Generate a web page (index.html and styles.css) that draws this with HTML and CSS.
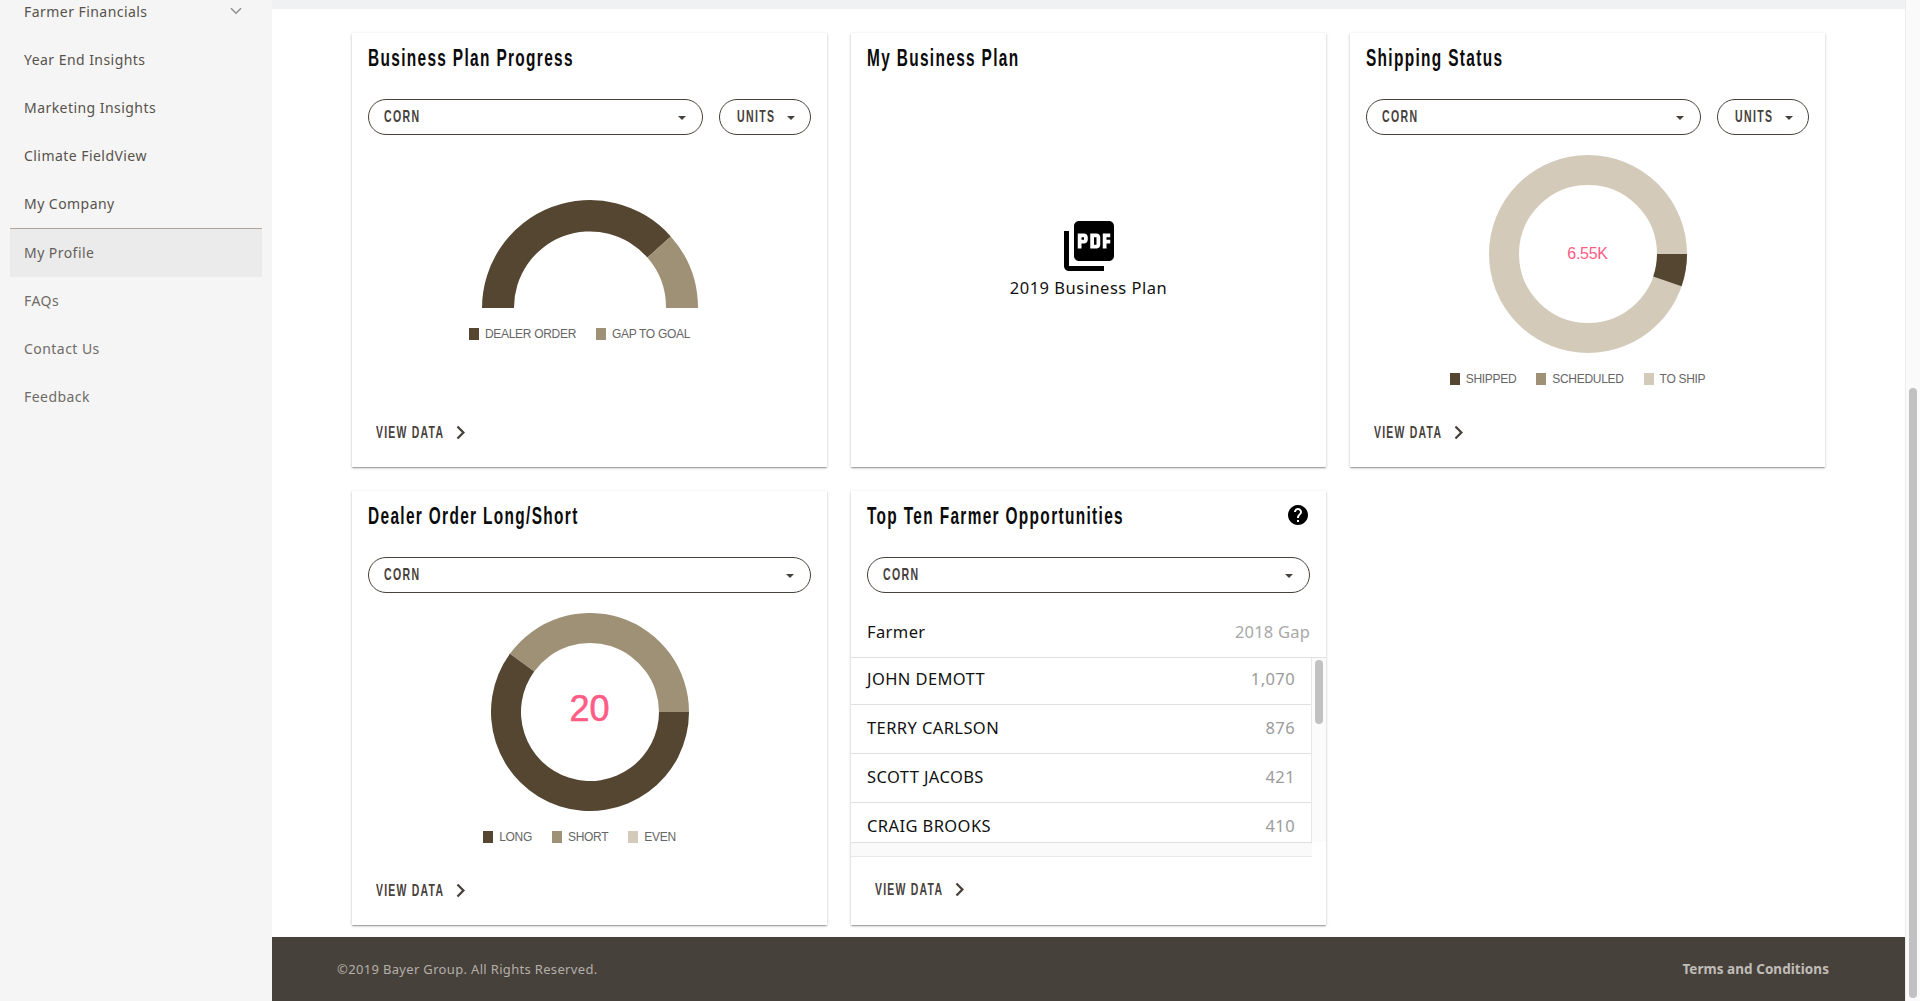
FILE: index.html
```html
<!DOCTYPE html>
<html lang="en">
<head>
<meta charset="utf-8">
<title>Dashboard</title>
<link rel="stylesheet" href="styles.css">
</head>
<body>
<aside class="sidebar">
  <nav class="nav">
    <a class="nav-item nav-item-expand"><span>Farmer Financials</span>
      <svg class="nav-chevron" width="12" height="8" viewBox="0 0 12 8"><path d="M1 1.2l5 5 5-5" fill="none" stroke="#8f8f8f" stroke-width="1.5"/></svg>
    </a>
    <a class="nav-item">Year End Insights</a>
    <a class="nav-item">Marketing Insights</a>
    <a class="nav-item">Climate FieldView</a>
    <a class="nav-item">My Company</a>
    <a class="nav-item nav-item-active">My Profile</a>
    <a class="nav-item nav-item-muted">FAQs</a>
    <a class="nav-item nav-item-muted">Contact Us</a>
    <a class="nav-item nav-item-muted">Feedback</a>
  </nav>
</aside>
<div class="main">
  <div class="top-strip"></div>
  <main class="content">
    <section class="card">
      <header class="card-head"><h2 class="card-title"><span class="squeeze">Business Plan Progress</span></h2></header>
      <div class="filters">
        <div class="pill pill-grow"><span class="pill-label">CORN</span><i class="caret"></i></div>
        <div class="pill pill-unit"><span class="pill-label">UNITS</span><i class="caret"></i></div>
      </div>
      <div class="chart chart-gauge">
        <svg class="gauge" width="216" height="108" viewBox="0 0 216 108">
          <path fill="#544630" d="M0 108A108 108 0 0 1 188.8 36.4L165.4 57.6A76 76 0 0 0 32 108Z"/>
          <path fill="#9f9176" d="M188.8 36.4A108 108 0 0 1 216 108H184A76 76 0 0 0 165.4 57.6Z"/>
        </svg>
        <ul class="legend">
          <li class="legend-item"><i class="swatch swatch-dark"></i>DEALER ORDER</li>
          <li class="legend-item"><i class="swatch swatch-mid"></i>GAP TO GOAL</li>
        </ul>
      </div>
      <a class="view-data"><span class="squeeze-action">VIEW DATA</span><svg class="view-icon" width="27" height="27" viewBox="0 0 24 24"><path fill="#47413b" d="M10 6L8.59 7.41 13.17 12l-4.58 4.59L10 18l6-6z"/></svg></a>
    </section>

    <section class="card">
      <header class="card-head"><h2 class="card-title"><span class="squeeze">My Business Plan</span></h2></header>
      <div class="plan">
        <svg class="plan-icon" width="60" height="60" viewBox="0 0 24 24"><path fill="#000" d="M20 2H8c-1.1 0-2 .9-2 2v12c0 1.1.9 2 2 2h12c1.1 0 2-.9 2-2V4c0-1.1-.9-2-2-2zm-8.5 7.5c0 .83-.67 1.5-1.5 1.5H9v2H7.5V7H10c.83 0 1.5.67 1.5 1.5v1zm5 2c0 .83-.67 1.5-1.5 1.5h-2.5V7H15c.83 0 1.5.67 1.5 1.5v3zm4-3H19v1h1.5V11H19v2h-1.5V7h3v1.5zM9 9.5h1v-1H9v1zM4 6H2v14c0 1.1.9 2 2 2h14v-2H4V6zm10 5.5h1v-3h-1v3z"/></svg>
        <div class="plan-name">2019 Business Plan</div>
      </div>
    </section>

    <section class="card">
      <header class="card-head"><h2 class="card-title"><span class="squeeze">Shipping Status</span></h2></header>
      <div class="filters">
        <div class="pill pill-grow"><span class="pill-label">CORN</span><i class="caret"></i></div>
        <div class="pill pill-unit"><span class="pill-label">UNITS</span><i class="caret"></i></div>
      </div>
      <div class="chart">
        <div class="donut">
          <svg width="198" height="198" viewBox="-99 -99 198 198">
            <circle r="84" fill="none" stroke="#d3cab9" stroke-width="30"/>
            <path fill="#544630" d="M99 0A99 99 0 0 1 93.6 32.2L65.2 22.5A69 69 0 0 0 69 0Z"/>
          </svg>
          <div class="donut-value">6.55K</div>
        </div>
        <ul class="legend">
          <li class="legend-item"><i class="swatch swatch-dark"></i>SHIPPED</li>
          <li class="legend-item"><i class="swatch swatch-mid"></i>SCHEDULED</li>
          <li class="legend-item"><i class="swatch swatch-light"></i>TO SHIP</li>
        </ul>
      </div>
      <a class="view-data"><span class="squeeze-action">VIEW DATA</span><svg class="view-icon" width="27" height="27" viewBox="0 0 24 24"><path fill="#47413b" d="M10 6L8.59 7.41 13.17 12l-4.58 4.59L10 18l6-6z"/></svg></a>
    </section>

    <section class="card">
      <header class="card-head"><h2 class="card-title"><span class="squeeze">Dealer Order Long/Short</span></h2></header>
      <div class="filters">
        <div class="pill pill-grow"><span class="pill-label">CORN</span><i class="caret"></i></div>
      </div>
      <div class="chart">
        <div class="donut">
          <svg width="198" height="198" viewBox="-99 -99 198 198">
            <path fill="#9f9176" d="M-80.1 -58.2A99 99 0 0 1 99 0H69A69 69 0 0 0 -55.8 -40.6Z"/>
            <path fill="#544630" d="M99 0A99 99 0 1 1 -80.1 -58.2L-55.8 -40.6A69 69 0 1 0 69 0Z"/>
          </svg>
          <div class="donut-value donut-value-large">20</div>
        </div>
        <ul class="legend">
          <li class="legend-item"><i class="swatch swatch-dark"></i>LONG</li>
          <li class="legend-item"><i class="swatch swatch-mid"></i>SHORT</li>
          <li class="legend-item"><i class="swatch swatch-light"></i>EVEN</li>
        </ul>
      </div>
      <a class="view-data"><span class="squeeze-action">VIEW DATA</span><svg class="view-icon" width="27" height="27" viewBox="0 0 24 24"><path fill="#47413b" d="M10 6L8.59 7.41 13.17 12l-4.58 4.59L10 18l6-6z"/></svg></a>
    </section>

    <section class="card">
      <header class="card-head card-head-split"><h2 class="card-title"><span class="squeeze">Top Ten Farmer Opportunities</span></h2>
        <svg class="help-icon" width="24" height="24" viewBox="0 0 24 24"><path fill="#000" d="M12 2C6.48 2 2 6.48 2 12s4.48 10 10 10 10-4.48 10-10S17.52 2 12 2zm1 17h-2v-2h2v2zm2.07-7.75l-.9.92C13.45 12.9 13 13.5 13 15h-2v-.5c0-1.1.45-2.1 1.17-2.83l1.24-1.26c.37-.36.59-.86.59-1.41 0-1.1-.9-2-2-2s-2 .9-2 2H8c0-2.21 1.79-4 4-4s4 1.79 4 4c0 .88-.36 1.68-.93 2.25z"/></svg>
      </header>
      <div class="filters">
        <div class="pill pill-grow"><span class="pill-label">CORN</span><i class="caret"></i></div>
      </div>
      <div class="table-head"><span>Farmer</span><span class="table-head-gap">2018 Gap</span></div>
      <div class="table-wrap">
        <div class="table-rows">
          <div class="row"><span>JOHN DEMOTT</span><span class="row-value">1,070</span></div>
          <div class="row"><span>TERRY CARLSON</span><span class="row-value">876</span></div>
          <div class="row"><span>SCOTT JACOBS</span><span class="row-value">421</span></div>
          <div class="row"><span>CRAIG BROOKS</span><span class="row-value">410</span></div>
        </div>
        <div class="table-track"><div class="table-thumb"></div></div>
      </div>
      <div class="table-hscroll"></div>
      <a class="view-data view-data-table"><span class="squeeze-action">VIEW DATA</span><svg class="view-icon" width="27" height="27" viewBox="0 0 24 24"><path fill="#47413b" d="M10 6L8.59 7.41 13.17 12l-4.58 4.59L10 18l6-6z"/></svg></a>
    </section>
  </main>
  <footer class="footer">
    <span>©2019 Bayer Group. All Rights Reserved.</span>
    <a class="footer-link">Terms and Conditions</a>
  </footer>
</div>
<div class="page-scrollbar"><div class="page-thumb"></div></div>
</body>
</html>
```
FILE: styles.css
```css
* { box-sizing: border-box; }
html, body { height: 100%; }
body {
  margin: 0;
  display: flex;
  height: 1001px;
  overflow: hidden;
  background: #fff;
  color: #111;
  font-family: "Noto Sans", "Open Sans", sans-serif;
}
ul { margin: 0; padding: 0; list-style: none; }
h2 { margin: 0; font-weight: 700; }

.sidebar { width: 272px; flex: none; background: #f5f5f5; padding: 0 10px; overflow: hidden; }
.nav { margin-top: -12px; }
.nav-item {
  display: flex;
  align-items: center;
  justify-content: space-between;
  height: 48px;
  padding: 0 0 2px 14px;
  font-size: 14px;
  letter-spacing: .45px;
  color: #57524c;
}
.nav-item-expand { padding-right: 20px; }
.nav-item-active { background: #ebebeb; box-shadow: 0 -1px 0 #aca5a0; margin-top: 1px; margin-bottom: -1px; color: #66615b; }
.nav-item-muted { color: #6f6b66; padding-bottom: 0; }

.main { width: 1633px; flex: none; display: flex; flex-direction: column; }
.top-strip { height: 9px; background: #eff1f3; }
.content {
  display: grid;
  grid-template-columns: repeat(3, 475px);
  grid-auto-rows: 434px;
  gap: 24px;
  padding: 24px 0 0 80px;
}
.card {
  display: flex;
  flex-direction: column;
  background: #fff;
  box-shadow: 0 1px 3px rgba(0,0,0,.2), 0 1px 1px rgba(0,0,0,.14), 0 2px 1px -1px rgba(0,0,0,.12);
}
.card-head { height: 48px; padding: 2px 16px 0; display: flex; align-items: center; flex: none; }
.card-head-split { justify-content: space-between; }
.card-title { font-family: "Liberation Sans Narrow", "Liberation Sans", sans-serif; font-size: 23px; line-height: 46px; color: #0b0b0b; white-space: nowrap; }
.squeeze { display: inline-block; letter-spacing: 2px; transform: scaleX(.67); transform-origin: left center; }
.help-icon { margin-top: -2px; }

.filters { display: flex; gap: 16px; padding: 0 16px; margin-top: 18px; flex: none; }
.pill {
  height: 36px;
  border: 1px solid #47413b;
  border-radius: 18px;
  padding: 0 16px 0 15px;
  display: flex;
  align-items: center;
  justify-content: space-between;
  color: #47413b;
}
.pill-grow { flex: 1; }
.pill-unit { width: 92px; flex: none; padding: 0 15px 0 17px; }
.pill-label { font-family: "Liberation Sans Narrow", "Liberation Sans", sans-serif; font-weight: 700; font-size: 17px; letter-spacing: 2.2px; display: inline-block; transform: scaleX(.62); transform-origin: left center; width: 36px; white-space: nowrap; }
.caret { width: 0; height: 0; border-left: 4px solid transparent; border-right: 4px solid transparent; border-top: 4.5px solid #47413b; flex: none; margin-top: 2px; }

.chart { display: flex; flex-direction: column; align-items: center; padding-top: 20px; flex: none; }
.chart-gauge { padding-top: 65px; }
.gauge { display: block; }
.legend { display: flex; gap: 20px; margin-top: 20px; padding-right: 20px; }
.legend-item { display: flex; align-items: center; gap: 6px; height: 12px; font-family: "Liberation Sans", Arial, sans-serif; font-size: 12px; letter-spacing: -.3px; color: #666; }
.swatch { width: 10px; height: 12px; display: block; flex: none; }
.swatch-dark { background: #544630; }
.swatch-mid { background: #9f9176; }
.swatch-light { background: #d3cab9; }

.donut { position: relative; width: 198px; height: 198px; }
.donut svg { display: block; }
.donut-value { position: absolute; inset: 0; display: flex; align-items: center; justify-content: center; padding-bottom: 1px; font-family: "Liberation Sans", Arial, sans-serif; font-size: 16px; letter-spacing: -.3px; color: #ff5c85; }
.donut-value-large { font-size: 36px; letter-spacing: 0; padding-bottom: 6px; -webkit-text-stroke: .6px #ff5c85; }

.view-data { margin-top: auto; height: 70px; padding-left: 24px; display: flex; align-items: center; color: #47413b; flex: none; }
.squeeze-action { font-family: "Liberation Sans Narrow", "Liberation Sans", sans-serif; font-weight: 700; font-size: 17px; letter-spacing: 2px; display: inline-block; width: 71px; padding-top: 2px; transform: scaleX(.615); transform-origin: left center; white-space: nowrap; }
.view-data-table .squeeze-action { padding-top: 0; }
.view-icon { flex: none; }
.view-data-table { height: 69px; padding-bottom: 4px; }

.plan { display: flex; flex-direction: column; align-items: center; padding-top: 135px; }
.plan-icon { display: block; }
.plan-name { font-size: 16.5px; line-height: 24px; color: #111; letter-spacing: .5px; }

.table-head { display: flex; justify-content: space-between; align-items: center; height: 50px; margin-top: 15px; padding: 0 16px 2px; border-bottom: 1px solid #e0e0e0; font-size: 16.5px; letter-spacing: .4px; flex: none; }
.table-head-gap { color: #a8a8a8; letter-spacing: .2px; }
.table-wrap { display: flex; height: 184px; overflow: hidden; flex: none; }
.table-rows { width: 461px; flex: none; margin-top: -2px; height: 186px; overflow: hidden; border-right: 1px solid #e8e8e8; }
.row { display: flex; justify-content: space-between; align-items: center; height: 49px; padding: 0 16px 3px; border-bottom: 1px solid #e0e0e0; font-size: 16.5px; letter-spacing: .4px; color: #111; }
.row-value { color: #9c9c9c; }
.table-track { width: 14px; flex: none; background: #fbfbfb; padding: 2px 3px; }
.table-thumb { width: 8px; height: 64px; border-radius: 4px; background: #c1c1c1; }
.table-hscroll { width: 461px; height: 15px; background: #fafafa; border-top: 1px solid #e0e0e0; border-bottom: 1px solid #e8e8e8; flex: none; }

.footer { height: 64px; margin-top: 12px; background: #47413b; display: flex; align-items: center; justify-content: space-between; padding: 0 76px 1px 65px; color: #b3afa9; font-size: 13px; letter-spacing: .33px; }
.footer-link { font-weight: 700; color: #c0bdb8; font-size: 13.5px; letter-spacing: .05px; }

.page-scrollbar { width: 15px; flex: none; background: #fafafa; border-left: 1px solid #ececec; padding: 388px 3px 3px 3px; }
.page-thumb { width: 8px; height: 610px; border-radius: 4px; background: #c1c1c1; }
```
